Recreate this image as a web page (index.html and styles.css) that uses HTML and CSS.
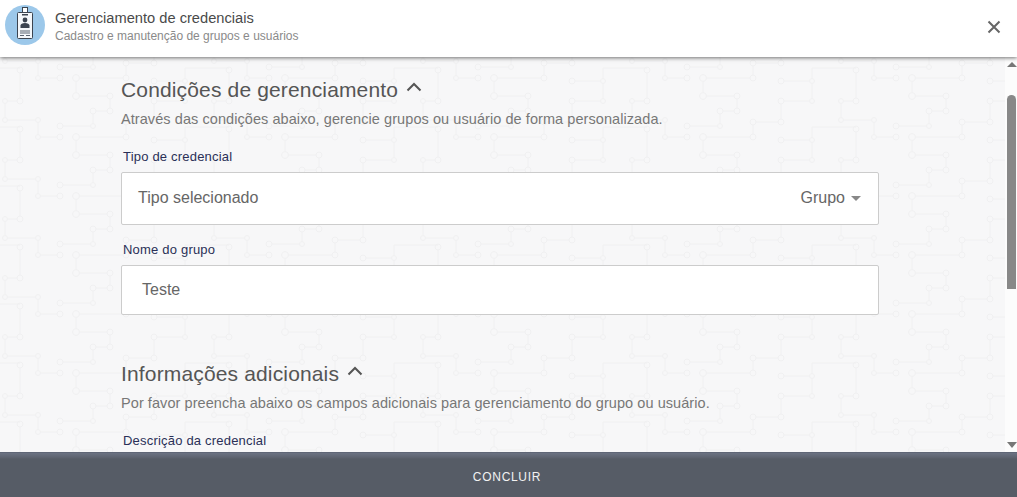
FILE: index.html
```html
<!DOCTYPE html>
<html lang="pt-BR">
<head>
    <meta charset="UTF-8">
    <meta name="viewport" content="width=device-width, initial-scale=1.0">
    <title>Gerenciamento de credenciais</title>
    <link rel="stylesheet" href="styles.css">
</head>
<body>
    <header class="top-bar">
        <div class="top-icon">
            <svg width="40" height="40" viewBox="0 0 40 40">
                <circle cx="20" cy="20" r="20" fill="#9cc8ea"/>
                <rect x="17.5" y="2.5" width="5" height="7" fill="#fff" stroke="#3b4450"/>
                <rect x="12.5" y="7.5" width="15" height="26" rx="1" fill="#f4f7fa" stroke="#3b4450"/>
                <rect x="17" y="9" width="6" height="1.5" fill="#3b4450"/>
                <circle cx="20" cy="15" r="2.4" fill="#3b4450"/>
                <path d="M15.5 23v-2.5c0-1.500 2-2.500 4.500-2.500s4.500 1 4.500 2.500V23z" fill="#3b4450"/>
                <path d="M15 26h10M15 28h10M15 30.500h4M21 30.500h4" stroke="#5a6470" fill="none"/>
            </svg>
        </div>
        <div class="top-text">
            <div class="top-title">Gerenciamento de credenciais</div>
            <div class="top-sub">Cadastro e manutenção de grupos e usuários</div>
        </div>
        <button class="close-button">
            <svg width="14" height="14" viewBox="0 0 14 14">
                <path d="M1.500 1.500l11 11M12.500 1.500l-11 11" stroke="#666" stroke-width="2" fill="none"/>
            </svg>
        </button>
    </header>

    <div class="middle">
        <main class="content">
            <div class="form-area">
                <h2 class="section-title">
                    Condições de gerenciamento
                    <svg class="chevron" width="16" height="10" viewBox="0 0 16 10">
                        <path d="M1.500 8.500L8 2l6.500 6.500" stroke="#555" stroke-width="2" fill="none"/>
                    </svg>
                </h2>
                <p class="section-desc">Através das condições abaixo, gerencie grupos ou usuário de forma personalizada.</p>

                <label class="field-label">Tipo de credencial</label>
                <div class="select-box">
                    <span>Tipo selecionado</span>
                    <span class="select-value">Grupo <i class="caret"></i></span>
                </div>

                <label class="field-label">Nome do grupo</label>
                <div class="input-box">Teste</div>

                <h2 class="section-title second">
                    Informações adicionais
                    <svg class="chevron" width="16" height="10" viewBox="0 0 16 10">
                        <path d="M1.500 8.500L8 2l6.500 6.500" stroke="#555" stroke-width="2" fill="none"/>
                    </svg>
                </h2>
                <p class="section-desc">Por favor preencha abaixo os campos adicionais para gerenciamento do grupo ou usuário.</p>

                <label class="field-label first">Descrição da credencial</label>
            </div>
        </main>
        <div class="scrollbar">
            <i class="arrow-up"></i>
            <div class="scroll-track"><div class="scroll-thumb"></div></div>
            <i class="arrow-down"></i>
        </div>
    </div>

    <footer class="bottom-bar">CONCLUIR</footer>
</body>
</html>
```

FILE: styles.css
```css
/* Styles généraux */
html,
body {
    height: 100%;
}

body {
    font-family: 'Liberation Sans', Arial, sans-serif;
    margin: 0;
    display: flex;
    flex-direction: column;
    overflow: hidden;
    color: #555;
}

/* Barre du haut */
.top-bar {
    height: 57px;
    flex-shrink: 0;
    display: flex;
    align-items: center;
    padding: 0 15px 0 5px;
    background-color: #fff;
    box-shadow: 0 1px 4px rgba(0, 0, 0, 0.55);
    position: relative;
    z-index: 2;
    box-sizing: border-box;
}

.top-icon {
    width: 40px;
    height: 40px;
    margin-top: -7px;
}

.top-text {
    flex-grow: 1;
    margin-left: 10px;
    margin-top: -3px;
}

.top-title {
    font-size: 14.67px;
    line-height: 18px;
    color: #4a4a4a;
}

.top-sub {
    font-size: 12px;
    line-height: 18px;
    color: #8a8a8a;
}

.close-button {
    width: 16px;
    height: 16px;
    padding: 0;
    border: none;
    background: none;
    display: flex;
    justify-content: center;
    align-items: center;
    margin-top: -3px;
}

/* Zone centrale */
.middle {
    flex-grow: 1;
    min-height: 0;
    display: flex;
}

.content {
    flex-grow: 1;
    overflow: hidden;
    background-color: #f7f7f8;
    background-image: url("data:image/svg+xml,%3Csvg xmlns='http://www.w3.org/2000/svg' xmlns:xlink='http://www.w3.org/1999/xlink' width='209' height='59'%3E%3Cdefs%3E%3Cg id='t' fill='none' stroke='%23f0f0f1'%3E%3Cpath d='M20 11V42H5V61H38V78H60M60 67H93V52H110V37H76V19H126V4H154V-17H185V-37H154M185 -37V-50H229'/%3E%3Cg fill='%23f7f7f8'%3E%3Ccircle cx='20' cy='11' r='3'/%3E%3Ccircle cx='20' cy='42' r='3'/%3E%3Ccircle cx='5' cy='42' r='2.500'/%3E%3Ccircle cx='5' cy='61' r='2.500'/%3E%3Ccircle cx='38' cy='61' r='2.500'/%3E%3Ccircle cx='38' cy='78' r='2.500'/%3E%3Ccircle cx='60' cy='78' r='3'/%3E%3Ccircle cx='60' cy='67' r='3'/%3E%3Ccircle cx='93' cy='67' r='2.500'/%3E%3Ccircle cx='93' cy='52' r='3'/%3E%3Ccircle cx='110' cy='52' r='3'/%3E%3Ccircle cx='110' cy='37' r='3'/%3E%3Ccircle cx='76' cy='37' r='3.500'/%3E%3Ccircle cx='76' cy='19' r='3.500'/%3E%3Ccircle cx='126' cy='19' r='3'/%3E%3Ccircle cx='126' cy='4' r='3'/%3E%3Ccircle cx='154' cy='4' r='3'/%3E%3Ccircle cx='154' cy='-17' r='3'/%3E%3Ccircle cx='185' cy='-17' r='2.500'/%3E%3Ccircle cx='185' cy='-37' r='2.500'/%3E%3Ccircle cx='154' cy='-37' r='3'/%3E%3C/g%3E%3C/g%3E%3C/defs%3E%3Cuse xlink:href='%23t'/%3E%3Cuse xlink:href='%23t' y='59'/%3E%3Cuse xlink:href='%23t' y='-59'/%3E%3Cuse xlink:href='%23t' x='-209'/%3E%3Cuse xlink:href='%23t' x='-209' y='59'/%3E%3Cuse xlink:href='%23t' x='-209' y='-59'/%3E%3C/svg%3E");
    background-position: 0 2px;
}

.form-area {
    width: 758px;
    margin-left: 121px;
    padding-top: 21px;
}

.section-title {
    margin: 0;
    font-size: 21px;
    font-weight: normal;
    line-height: 24px;
    color: #555;
    letter-spacing: 0.15px;
}

.section-title.second {
    margin-top: 47px;
}

.chevron {
    margin-left: 2px;
    vertical-align: 5px;
}

.section-desc {
    margin: 7px 0 0;
    font-size: 14.5px;
    line-height: 20px;
    color: #777;
    letter-spacing: 0.07px;
}

.field-label {
    display: block;
    margin: 16px 0 6px 2px;
    font-size: 13px;
    line-height: 18px;
    color: #2a3057;
    letter-spacing: 0.2px;
}

.section-desc + .field-label {
    margin-top: 19px;
}

.select-box,
.input-box {
    background-color: #fff;
    border: 1px solid #ccc;
    border-radius: 2px;
    box-sizing: border-box;
    font-size: 16px;
    color: #666;
}

.select-box {
    height: 53px;
    display: flex;
    justify-content: space-between;
    align-items: center;
    padding: 0 17px 2px 16px;
}

.select-value {
    display: flex;
    align-items: center;
    gap: 6px;
}

.caret {
    width: 0;
    height: 0;
    border-left: 5px solid transparent;
    border-right: 5px solid transparent;
    border-top: 5px solid #888;
    margin-top: 2px;
}

.input-box {
    height: 50px;
    line-height: 48px;
    padding-left: 20px;
}

/* Barre de défilement */
.scrollbar {
    width: 12px;
    flex-shrink: 0;
    box-sizing: border-box;
    padding: 5px 1px 4px 2px;
    background-color: #fcfcfc;
    display: flex;
    flex-direction: column;
    align-items: center;
}

.arrow-up,
.arrow-down {
    width: 0;
    height: 0;
    border-left: 5px solid transparent;
    border-right: 5px solid transparent;
}

.arrow-up {
    border-bottom: 5px solid #777;
}

.arrow-down {
    border-top: 6px solid #777;
}

.scroll-track {
    flex-grow: 1;
    width: 100%;
    padding-top: 28px;
    box-sizing: border-box;
}

.scroll-thumb {
    height: 194px;
    background-color: #888;
    border-radius: 5px 5px 0 0;
}

/* Bouton du bas */
.bottom-bar {
    height: 45px;
    flex-shrink: 0;
    box-sizing: border-box;
    padding: 4px 3px 0 0;
    display: flex;
    justify-content: center;
    align-items: center;
    background: linear-gradient(#6b7282 0, #5f6572 4px, #565c66 6px);
    border-top: 1px solid #5f6676;
    color: #f2f2f2;
    font-size: 12px;
    font-weight: normal;
    letter-spacing: 0.7px;
}
```
